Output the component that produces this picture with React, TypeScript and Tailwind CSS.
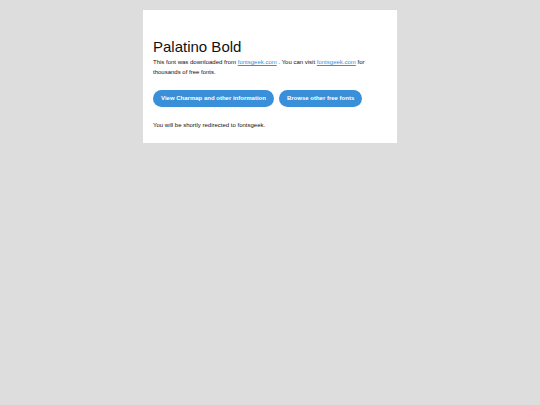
export default function App() {
  return (
    <div className="min-h-[405px] w-full bg-[#dddddd] pt-[10px] font-['Liberation_Sans',Arial,sans-serif]">
      <div className="mx-auto w-[254px] bg-white px-[10px] pt-[28px] pb-[13px] text-[#111]">
        <h1 className="text-[15px] leading-[17px] font-normal">Palatino Bold</h1>
        <p className="mt-[2px] text-[6px] leading-[10px]">
          This font was downloaded from{" "}
          <a href="#" className="text-[#3a8fd9] underline">fontsgeek.com</a> . You can visit{" "}
          <a href="#" className="text-[#3a8fd9] underline">fontsgeek.com</a> for thousands of free fonts.
        </p>
        <div className="mt-[13px] flex gap-[5px]">
          <a href="#" className="flex h-[17px] items-center rounded-full bg-[#3a8fd9] px-[8px] text-[6px] font-bold text-white">
            View Charmap and other information
          </a>
          <a href="#" className="flex h-[17px] items-center rounded-full bg-[#3a8fd9] px-[8px] text-[6px] font-bold text-white">
            Browse other free fonts
          </a>
        </div>
        <p className="mt-[13px] text-[6px] leading-[10px]">You will be shortly redirected to fontsgeek.</p>
      </div>
    </div>
  );
}
